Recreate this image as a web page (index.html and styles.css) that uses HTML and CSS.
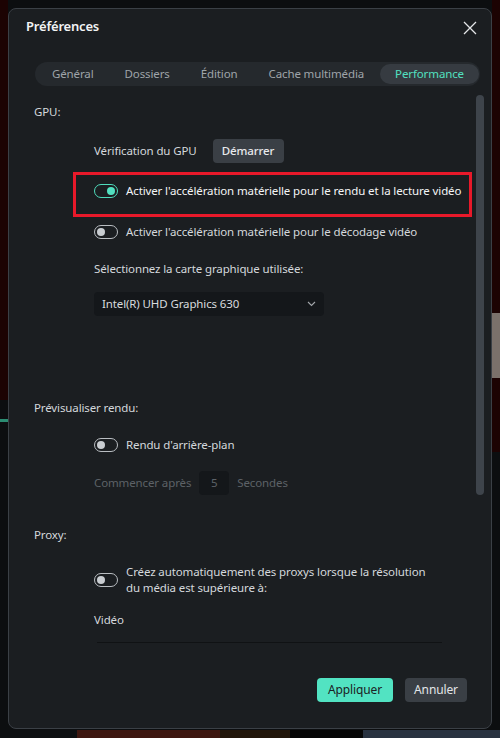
FILE: index.html
```html
<!DOCTYPE html>
<html lang="fr">
<head>
<meta charset="utf-8">
<title>Préférences</title>
<link rel="stylesheet" href="styles.css">
</head>
<body>
<div class="dialog">
  <div class="header">
    <div class="title">Préférences</div>
    <svg class="close" width="14" height="14" viewBox="0 0 14 14"><path d="M1 1 L13 13 M13 1 L1 13" stroke="#e4e6e8" stroke-width="1.3" fill="none"/></svg>
  </div>
  <div class="tabs">
    <div class="tab">Général</div>
    <div class="tab">Dossiers</div>
    <div class="tab">Édition</div>
    <div class="tab">Cache multimédia</div>
    <div class="tab active">Performance</div>
  </div>
  <div class="body">
    <div class="content">
      <div class="sec sec-gpu">GPU:</div>
      <div class="row row-verif">
        <span class="lbl">Vérification du GPU</span>
        <span class="btn-start">Démarrer</span>
      </div>
      <div class="row row-t1">
        <span class="toggle on"><span class="knob"></span></span>
        <span class="opt bright">Activer l'accélération matérielle pour le rendu et la lecture vidéo</span>
      </div>
      <div class="row row-t2">
        <span class="toggle"><span class="knob"></span></span>
        <span class="opt">Activer l'accélération matérielle pour le décodage vidéo</span>
      </div>
      <div class="row row-sel">Sélectionnez la carte graphique utilisée:</div>
      <div class="row row-dd">
        <div class="dropdown">
          <span>Intel(R) UHD Graphics 630</span>
          <svg width="9" height="6" viewBox="0 0 9 6"><path d="M1 1 L4.5 4.5 L8 1" stroke="#a3a7ab" stroke-width="1.1" fill="none"/></svg>
        </div>
      </div>
      <div class="sec sec-prev">Prévisualiser rendu:</div>
      <div class="row row-t3">
        <span class="toggle"><span class="knob"></span></span>
        <span class="opt">Rendu d'arrière-plan</span>
      </div>
      <div class="row row-start dim">
        <span>Commencer après</span>
        <span class="num">5</span>
        <span>Secondes</span>
      </div>
      <div class="sec sec-proxy">Proxy:</div>
      <div class="row row-t4">
        <span class="toggle"><span class="knob"></span></span>
        <span class="opt two">Créez automatiquement des proxys lorsque la résolution<br>du média est supérieure à:</span>
      </div>
      <div class="row row-video">Vidéo</div>
      <div class="divider"></div>
    </div>
    <div class="scrollbar"><div class="thumb"></div></div>
  </div>
  <div class="footer">
    <span class="btn-apply">Appliquer</span>
    <span class="btn-cancel">Annuler</span>
  </div>
  <div class="highlight"></div>
</div>
</body>
</html>
```
FILE: styles.css
```css
html, body {
  margin: 0;
  padding: 0;
}
body {
  width: 500px;
  height: 738px;
  overflow: hidden;
  padding: 8px 0 0 8px;
  box-sizing: border-box;
  font-family: "Noto Sans", "Open Sans", sans-serif;
  font-size: 11.5px;
  letter-spacing: -0.12px;
  color: #ccd0d4;
  background:
    linear-gradient(#7b716b, #7b716b) no-repeat 492px 313px / 8px 65px,
    linear-gradient(#2b8c72, #2b8c72) no-repeat 0 419px / 8px 3px,
    linear-gradient(#1c0303, #1c0303) no-repeat 0 0 / 8px 400px,
    linear-gradient(#1c0303, #1c0303) no-repeat 492px 0 / 8px 452px,
    linear-gradient(to right, #0d0f11 0 77px, #3e1710 77px 220px, #22160a 220px 290px, #060606 290px 363px, #283240 363px) no-repeat 0 730px / 100% 8px,
    #0c0e10;
}
.dialog {
  position: relative;
  width: 484px;
  height: 721px;
  box-sizing: border-box;
  background: #1b1e21;
  border: 1px solid #3b4046;
  border-radius: 8px;
  display: flex;
  flex-direction: column;
}
.header {
  height: 36px;
  display: flex;
  align-items: flex-start;
  justify-content: space-between;
  padding: 0 14px 0 17px;
}
.title {
  margin-top: 7px;
  font-size: 13px;
  line-height: 20px;
  font-weight: 600;
  letter-spacing: -0.2px;
  color: #f2f3f4;
}
.close {
  margin-top: 12px;
}
.tabs {
  margin: 17px 11px 0 26px;
  height: 24px;
  box-sizing: border-box;
  padding: 2px 1px 2px 2px;
  border-radius: 12px;
  background: #25292d;
  display: flex;
  justify-content: space-between;
}
.tab {
  padding: 0 15px;
  line-height: 20px;
  border-radius: 10px;
  white-space: nowrap;
  color: #9fa4a9;
}
.tab.active {
  background: #363b41;
  color: #52e0c0;
}
.body {
  flex: 1;
  display: flex;
  overflow: hidden;
}
.content {
  flex: 1;
  display: flex;
  flex-direction: column;
}
.scrollbar {
  width: 8px;
  margin-right: 7px;
  padding-top: 9px;
}
.thumb {
  width: 8px;
  height: 400px;
  border-radius: 4px;
  background: #3e444b;
}
.sec {
  padding-left: 25px;
  height: 18px;
  line-height: 18px;
  color: #d4d8dc;
}
.row {
  padding-left: 85px;
  display: flex;
  align-items: center;
  line-height: 18px;
  white-space: nowrap;
  color: #d4d8dc;
}
.sec-gpu { margin-top: 17px; }
.row-verif { margin-top: 18px; height: 24px; }
.btn-start {
  margin-left: 16px;
  width: 71px;
  height: 24px;
  line-height: 24px;
  text-align: center;
  border-radius: 4px;
  background: #3a3f45;
  color: #e8eaec;
  font-weight: 500;
}
.row-t1 { margin-top: 18px; height: 20px; }
.row-t2 { margin-top: 21px; height: 20px; }
.row-sel { margin-top: 18px; height: 18px; }
.row-dd { margin-top: 14px; }
.sec-prev { margin-top: 83px; }
.row-t3 { margin-top: 18px; height: 20px; }
.row-start { margin-top: 16px; height: 24px; }
.sec-proxy { margin-top: 31px; }
.row-t4 { margin-top: 20px; }
.row-video { margin-top: 15px; height: 18px; }
.toggle {
  position: relative;
  width: 24px;
  height: 14px;
  box-sizing: border-box;
  border: 1.5px solid #b9bdc1;
  border-radius: 7px;
  flex: none;
  margin-right: 8px;
}
.toggle .knob {
  position: absolute;
  top: 1.5px;
  left: 2px;
  width: 8px;
  height: 8px;
  border-radius: 50%;
  background: #c9cdd1;
}
.toggle.on {
  border-color: #4fdcbc;
}
.toggle.on .knob {
  left: auto;
  right: 2px;
  background: #52e0c0;
}
.opt.bright {
  color: #f4f5f6;
}
.opt.two {
  line-height: 16px;
}
.dropdown {
  width: 230px;
  height: 24px;
  box-sizing: border-box;
  padding: 0 8px 0 8px;
  border-radius: 4px;
  background: #14171a;
  display: flex;
  align-items: center;
  justify-content: space-between;
  color: #d8dbde;
}
.dim {
  color: #5d6267;
}
.num {
  width: 30px;
  height: 24px;
  line-height: 24px;
  text-align: center;
  border-radius: 4px;
  background: #14171a;
  margin: 0 8px;
}
.divider {
  margin: 13px 0 0 88px;
  width: 345px;
  height: 1px;
  background: #101214;
}
.footer {
  height: 69px;
  box-sizing: border-box;
  padding: 19px 24px 0 0;
  display: flex;
  justify-content: flex-end;
  gap: 12px;
}
.btn-apply, .btn-cancel {
  height: 24px;
  line-height: 24px;
  text-align: center;
  border-radius: 4px;
  font-size: 12px;
}
.btn-apply {
  width: 76px;
  background: #52e3c2;
  color: #1c2124;
}
.btn-cancel {
  width: 62px;
  background: #3a3f45;
  color: #e2e5e8;
}
.highlight {
  position: absolute;
  left: 64px;
  top: 163px;
  width: 399px;
  height: 45px;
  box-sizing: border-box;
  border: 3.5px solid #e8192a;
  pointer-events: none;
}
```
